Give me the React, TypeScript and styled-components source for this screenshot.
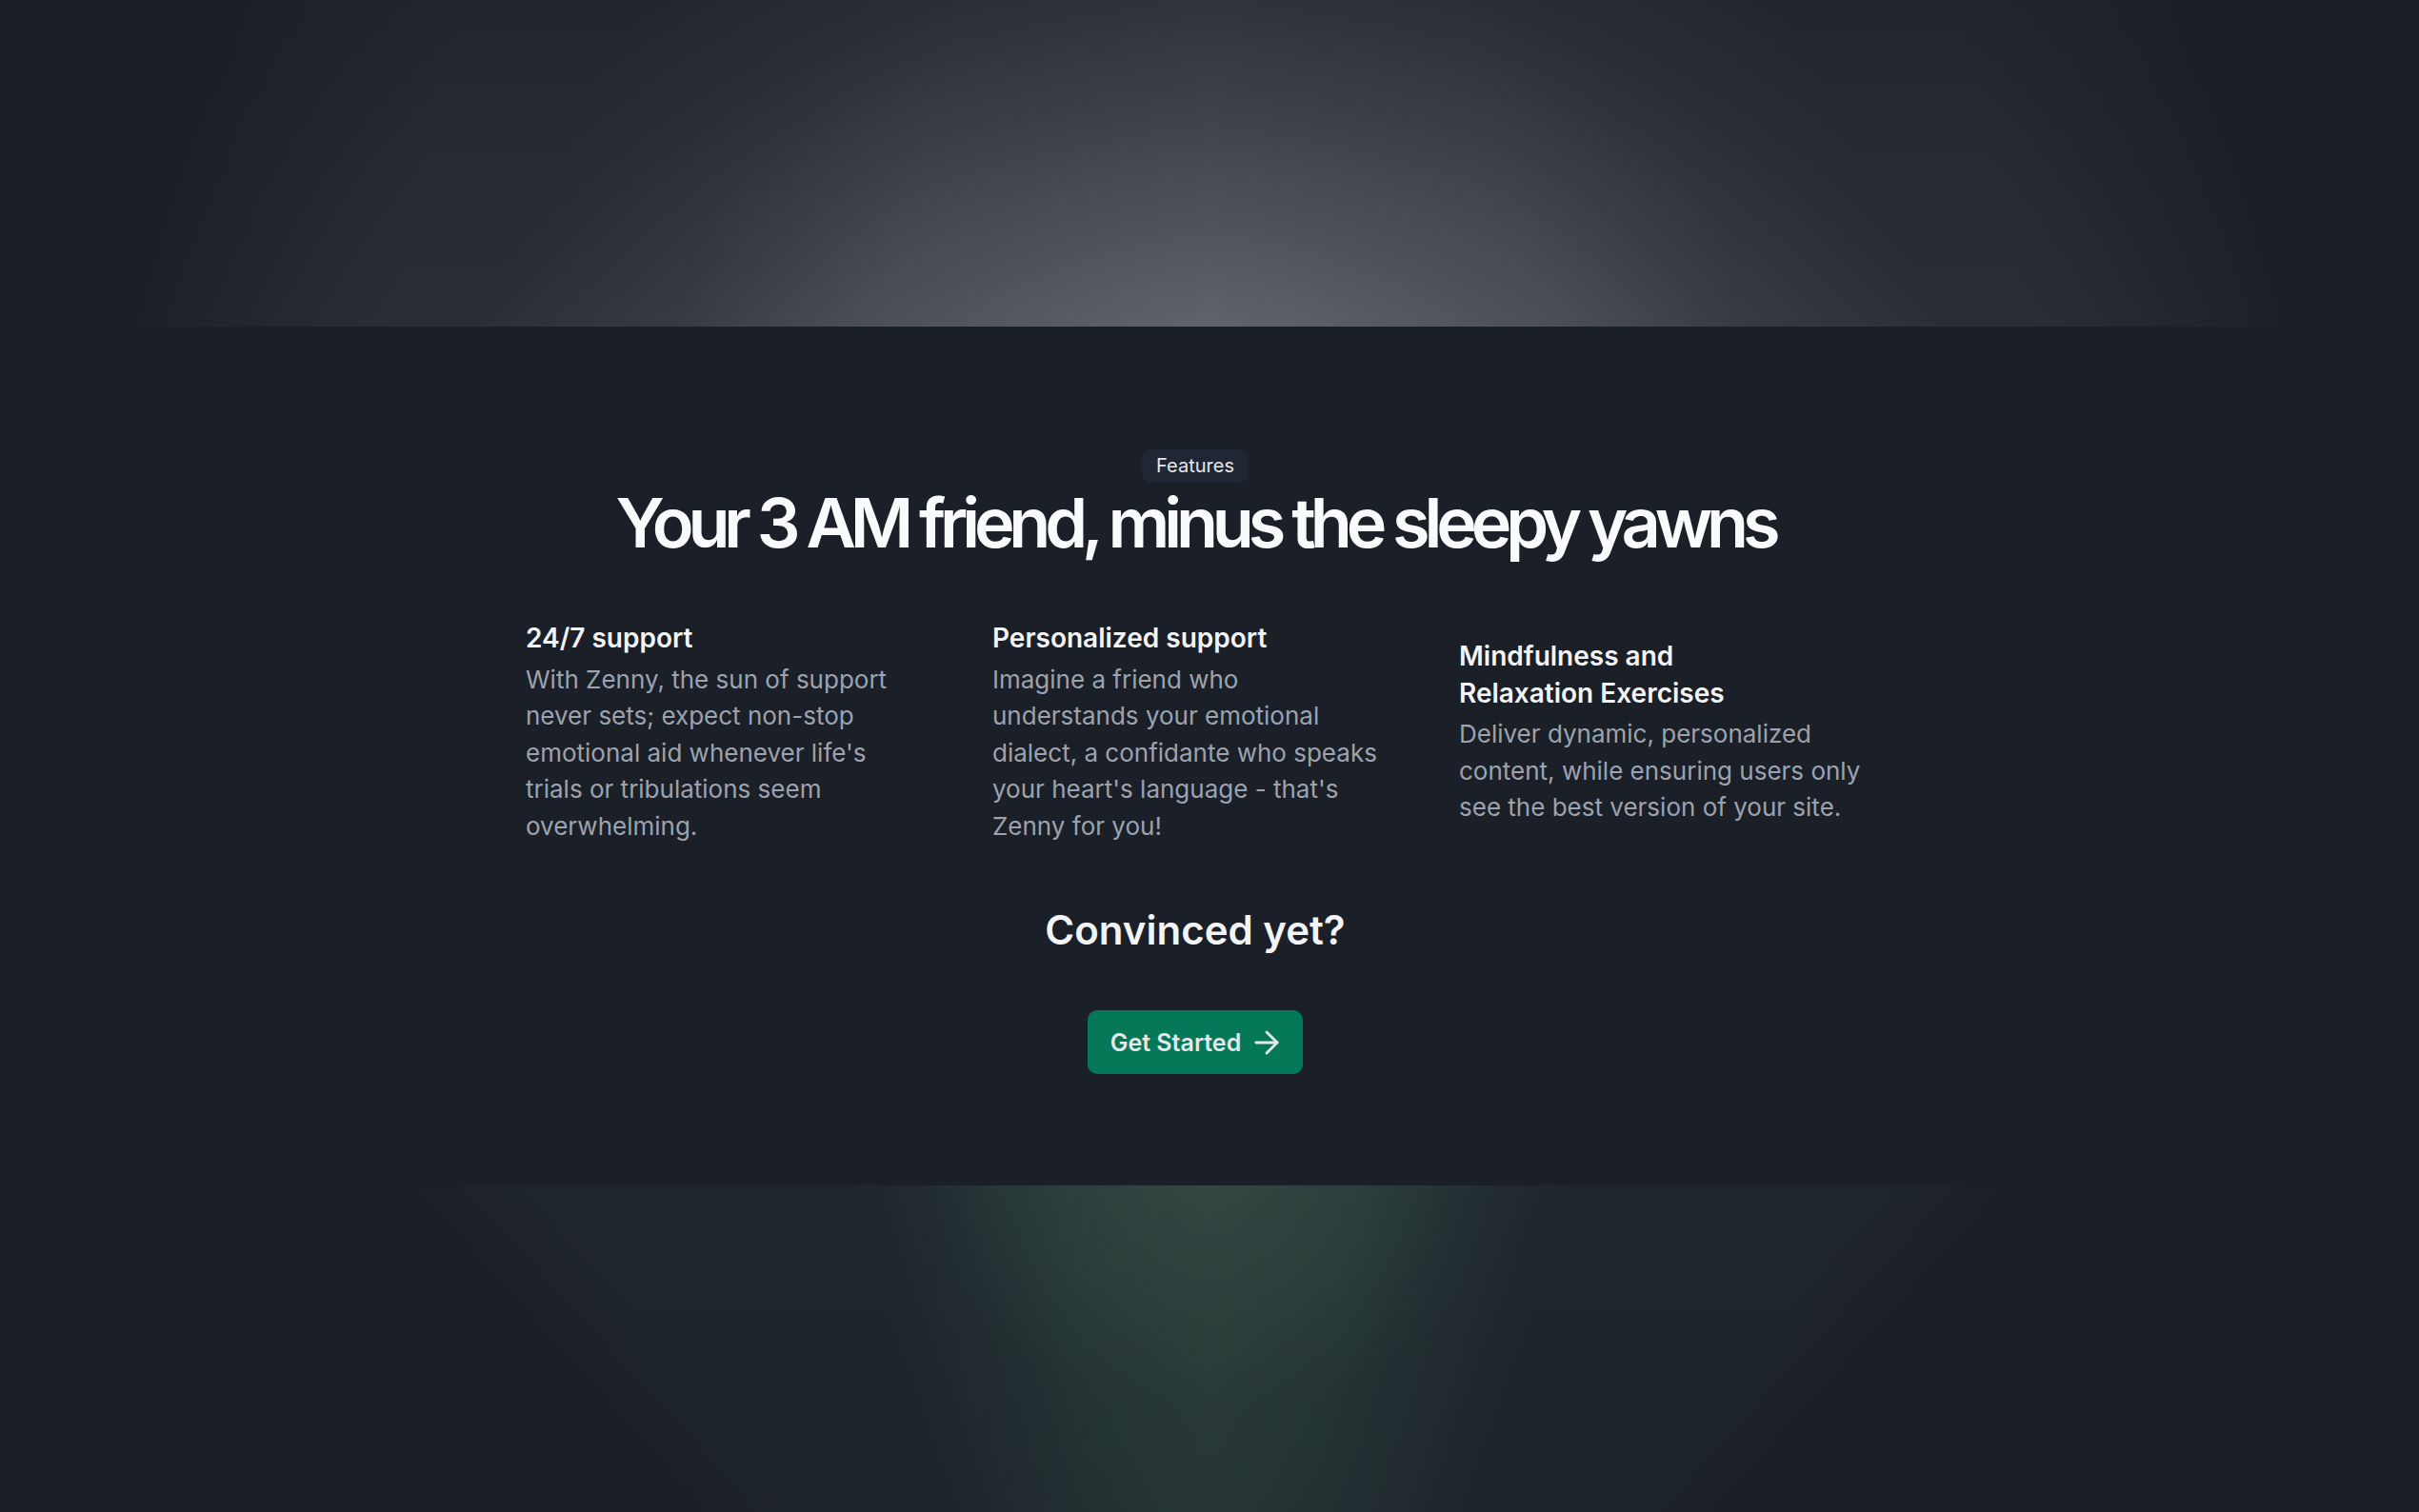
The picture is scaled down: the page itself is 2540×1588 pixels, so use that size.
import styled, { createGlobalStyle } from 'styled-components'
import { ArrowRight } from 'lucide-react'

const GlobalStyle = createGlobalStyle`
  * {
    box-sizing: border-box;
  }
  html,
  body {
    margin: 0;
    padding: 0;
    background-color: #1b1f27;
    overflow: hidden;
  }
  body {
    font-family: Inter, "Noto Sans", "Liberation Sans", sans-serif;
    -webkit-font-smoothing: antialiased;
  }
`

const Page = styled.div`
  display: flex;
  flex-direction: column;
  width: 2540px;
  height: 1588px;
  background-color: #1b1f27;
`

// light cone coming down from the top, brightest at its lower edge
const TopGlow = styled.div`
  height: 343px;
  flex-shrink: 0;
  background:
    linear-gradient(to bottom, rgba(27, 31, 39, 0.62) 0%, rgba(27, 31, 39, 0.25) 55%, rgba(27, 31, 39, 0) 100%),
    radial-gradient(ellipse 22% 100% at 50% 100%, rgba(120, 123, 128, 0.4) 0%, rgba(120, 123, 128, 0) 100%),
    conic-gradient(from 153.4deg at 50% -1200px, rgba(72, 75, 82, 0) 0deg, rgba(72, 75, 82, 0.9) 14deg, rgba(80, 83, 89, 1) 26.6deg, rgba(72, 75, 82, 0.9) 39deg, rgba(72, 75, 82, 0) 53.2deg, rgba(72, 75, 82, 0) 360deg),
    conic-gradient(from 163.3deg at 50% -3456px, rgba(42, 46, 54, 0) 0deg, rgba(42, 46, 54, 1) 4deg, rgba(42, 46, 54, 1) 29.4deg, rgba(42, 46, 54, 0) 33.4deg, rgba(42, 46, 54, 0) 360deg),
    #1b1f27;
`

// green cone fading downwards
const BottomGlow = styled.div`
  height: 343px;
  flex-shrink: 0;
  background:
    linear-gradient(to top, rgba(27, 31, 39, 0.25) 0%, rgba(27, 31, 39, 0) 100%),
    radial-gradient(ellipse 12% 70% at 50% 0%, rgba(64, 86, 80, 0.4) 0%, rgba(64, 86, 80, 0) 100%),
    conic-gradient(from -17.2deg at 50% 1229px, rgba(40, 57, 55, 0) 0deg, rgba(40, 57, 55, 0.95) 10deg, rgba(44, 62, 58, 1) 17.2deg, rgba(40, 57, 55, 0.95) 24.4deg, rgba(40, 57, 55, 0) 34.4deg, rgba(40, 57, 55, 0) 360deg),
    conic-gradient(from -43.4deg at 50% 926px, rgba(30, 37, 44, 0) 0deg, rgba(30, 37, 44, 1) 6deg, rgba(30, 37, 44, 1) 80.8deg, rgba(30, 37, 44, 0) 86.8deg, rgba(30, 37, 44, 0) 360deg),
    #1b1f27;
`

const Section = styled.section`
  height: 902px;
  flex-shrink: 0;
  display: flex;
  flex-direction: column;
  align-items: center;
  padding: 129px 30px 0 0;
`

const Badge = styled.span`
  display: inline-block;
  padding: 6px 15px;
  font-size: 20px;
  line-height: 23px;
  color: #e5e7eb;
  background-color: #1f2634;
  border-radius: 9px;
`

const Heading = styled.h2`
  margin: 2px 0 0;
  font-size: 72px;
  line-height: 80px;
  font-weight: 600;
  letter-spacing: -0.085em;
  color: #f9fafb;
  text-align: center;
`

const Features = styled.div`
  display: grid;
  grid-template-columns: repeat(3, 426px);
  column-gap: 64px;
  align-items: center;
  margin-top: 62px;
`

const Feature = styled.div`
  display: flex;
  flex-direction: column;
`

const FeatureTitle = styled.h3<{ $narrow?: boolean }>`
  margin: 0;
  max-width: ${(p) => (p.$narrow ? '300px' : 'none')};
  font-size: 28px;
  line-height: 38.5px;
  font-weight: 600;
  color: #f3f4f6;
`

const FeatureText = styled.p<{ $wide?: boolean }>`
  margin: 5px 0 0;
  max-width: ${(p) => (p.$wide ? 'none' : '418px')};
  font-size: 26px;
  line-height: 38.5px;
  color: #9ca3af;
`

const Question = styled.h3`
  margin: 65px 0 0;
  font-size: 42px;
  line-height: 49px;
  font-weight: 600;
  color: #f3f4f6;
`

const CtaButton = styled.button`
  display: inline-flex;
  align-items: center;
  gap: 8px;
  height: 67px;
  margin-top: 60px;
  padding: 0 19px 0 24px;
  font-family: inherit;
  font-size: 25px;
  font-weight: 600;
  color: #e5e7eb;
  background-color: #047857;
  border: none;
  border-radius: 10px;
  cursor: pointer;
`

const features = [
  {
    title: '24/7 support',
    text: "With Zenny, the sun of support never sets; expect non-stop emotional aid whenever life's trials or tribulations seem overwhelming.",
  },
  {
    title: 'Personalized support',
    text: "Imagine a friend who understands your emotional dialect, a confidante who speaks your heart's language - that's Zenny for you!",
  },
  {
    title: 'Mindfulness and Relaxation Exercises',
    text: 'Deliver dynamic, personalized content, while ensuring users only see the best version of your site.',
    narrow: true,
  },
]

const App = () => {
  return (
    <>
      <GlobalStyle />
      <Page>
        <TopGlow />
        <Section>
          <Badge>Features</Badge>
          <Heading>Your 3 AM friend, minus the sleepy yawns</Heading>
          <Features>
            {features.map((f) => (
              <Feature key={f.title}>
                <FeatureTitle $narrow={f.narrow}>{f.title}</FeatureTitle>
                <FeatureText $wide={f.narrow}>{f.text}</FeatureText>
              </Feature>
            ))}
          </Features>
          <Question>Convinced yet?</Question>
          <CtaButton>
            Get Started
            <ArrowRight size={38} strokeWidth={1.8} />
          </CtaButton>
        </Section>
        <BottomGlow />
      </Page>
    </>
  )
}

export default App
